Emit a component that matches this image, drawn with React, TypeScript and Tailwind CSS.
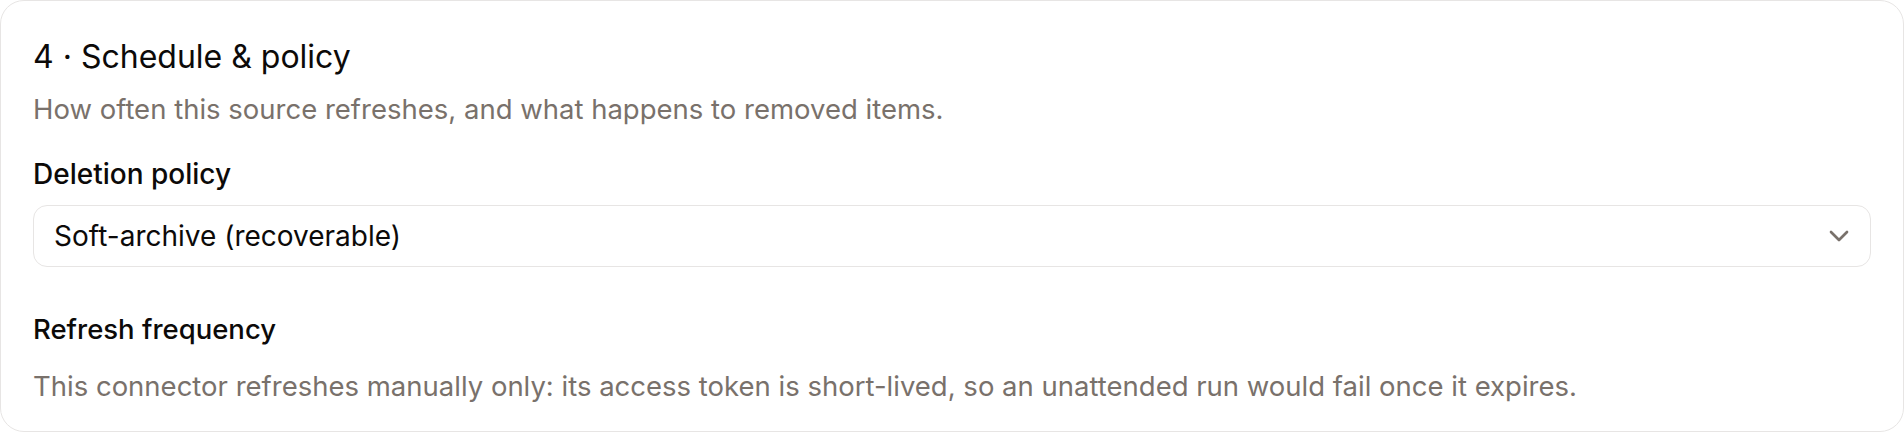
export default function App() {
  return (
    <div className="min-h-screen bg-white" style={{ fontFamily: "Inter, 'Noto Sans', sans-serif" }}>
      <section className="h-[432px] rounded-3xl border border-stone-200 bg-white px-8 pt-9">
        <h2 className="text-[32px] leading-10 text-stone-950">4 · Schedule &amp; policy</h2>
        <p className="mt-[14px] text-[27.5px] leading-9 text-stone-500">
          How often this source refreshes, and what happens to removed items.
        </p>

        <div className="mt-[29px]">
          <label className="block text-[28px] font-medium leading-9 text-stone-950">Deletion policy</label>
          <div className="mt-[13px] flex h-[62px] items-center justify-between rounded-[14px] border border-stone-200 bg-white pl-5 pr-[15px]">
            <span className="text-[28px] leading-9 text-stone-950">Soft-archive (recoverable)</span>
            <svg className="h-8 w-8 text-stone-500" viewBox="0 0 24 24" fill="none" stroke="currentColor" strokeWidth="2" strokeLinecap="round" strokeLinejoin="round">
              <path d="m6 9 6 6 6-6" />
            </svg>
          </div>
        </div>

        <div className="mt-11">
          <div className="text-[27.5px] font-medium leading-9 text-stone-950">Refresh frequency</div>
          <p className="mt-[21px] text-[27.5px] leading-9 text-stone-500">
            This connector refreshes manually only: its access token is short-lived, so an unattended run would fail once it expires.
          </p>
        </div>
      </section>
    </div>
  );
}
